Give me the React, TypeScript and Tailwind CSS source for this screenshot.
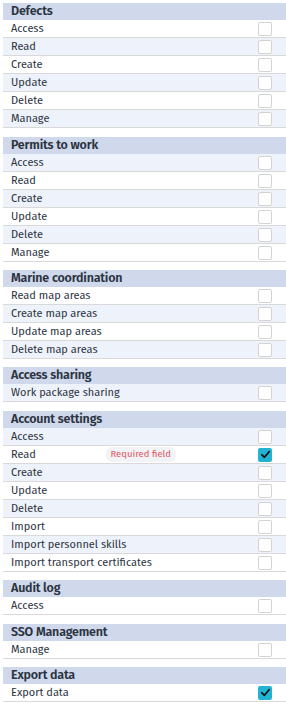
import React from "react";

type Section = { title: string; mt: string; rows: { label: string; checked?: boolean; required?: boolean }[] };

const sections: Section[] = [
  { title: "Defects", mt: "mt-0", rows: ["Access", "Read", "Create", "Update", "Delete", "Manage"].map((l) => ({ label: l })) },
  { title: "Permits to work", mt: "mt-[9px]", rows: ["Access", "Read", "Create", "Update", "Delete", "Manage"].map((l) => ({ label: l })) },
  { title: "Marine coordination", mt: "mt-[8px]", rows: ["Read map areas", "Create map areas", "Update map areas", "Delete map areas"].map((l) => ({ label: l })) },
  { title: "Access sharing", mt: "mt-[8px]", rows: [{ label: "Work package sharing" }] },
  {
    title: "Account settings",
    mt: "mt-[9px]",
    rows: [
      { label: "Access" },
      { label: "Read", checked: true, required: true },
      { label: "Create" },
      { label: "Update" },
      { label: "Delete" },
      { label: "Import" },
      { label: "Import personnel skills" },
      { label: "Import transport certificates" },
    ],
  },
  { title: "Audit log", mt: "mt-[8px]", rows: [{ label: "Access" }] },
  { title: "SSO Management", mt: "mt-[9px]", rows: [{ label: "Manage" }] },
  { title: "Export data", mt: "mt-[8px]", rows: [{ label: "Export data", checked: true }] },
];

function Checkbox({ checked }: { checked?: boolean }) {
  if (checked) {
    return (
      <div className="w-[14px] h-[14px] rounded-[2px] bg-[#22b3d2] flex items-center justify-center">
        <svg width="11" height="11" viewBox="0 0 12 12">
          <path d="M2 6.3 L4.8 9 L10 3" fill="none" stroke="#111" strokeWidth="1.9" strokeLinecap="round" strokeLinejoin="round" />
        </svg>
      </div>
    );
  }
  return <div className="w-[14px] h-[14px] rounded-[2px] border border-[#d3d3d3] bg-white" />;
}

export default function App() {
  let idx = 0;
  return (
    <div className="pt-[3px] pl-[3px] bg-white text-[#2c3341]" style={{ fontFamily: "'Fira Sans', 'Open Sans', Roboto, sans-serif" }}>
      <div className="flex flex-col">
        {sections.map((s) => {
          idx++;
          return (
            <div key={s.title} className={`flex flex-col ${s.mt}`}>
              <div className="h-[17px] bg-[#cfd9eb] pl-[8px] flex items-center text-[12.5px] font-semibold leading-none tracking-[-0.2px]">
                {s.title}
              </div>
              {s.rows.map((r) => {
                const i = idx++;
                const light = i % 2 === 0;
                return (
                  <div
                    key={r.label}
                    className={`h-[18px] border-b border-[#d9d9d9] pl-[8px] pr-[14px] flex items-center text-[11px] leading-none ${light ? "bg-[#eef2fa]" : "bg-white"}`}
                  >
                    <span className="flex-1">{r.label}</span>
                    {r.required && (
                      <span className="mr-[82px] h-[15px] px-[5px] rounded-[6px] bg-[#f2f3f6] text-[#e0575f] text-[9.5px] flex items-center">
                        Required field
                      </span>
                    )}
                    <Checkbox checked={r.checked} />
                  </div>
                );
              })}
            </div>
          );
        })}
      </div>
    </div>
  );
}
